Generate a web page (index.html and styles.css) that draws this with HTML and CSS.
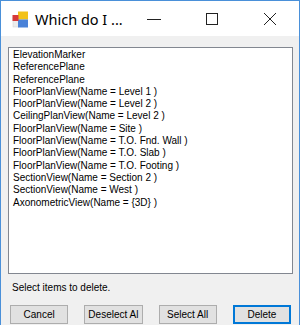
FILE: index.html
```html
<!DOCTYPE html>
<html lang="en">
<head>
    <meta charset="UTF-8">
    <title>Which do I ...</title>
    <link rel="stylesheet" href="styles.css">
</head>
<body>
    <div class="window">
        <div class="titlebar">
            <svg class="app-icon" width="17" height="17" viewBox="0 0 17 17">
                <rect x="1" y="6" width="6" height="10" fill="#ececec" stroke="#d0d0d0" stroke-width="0.5"/>
                <rect x="6" y="0.5" width="10" height="8" fill="#f2c21a"/>
                <rect x="6" y="8.5" width="10" height="8" fill="#4a82d8"/>
                <rect x="0.5" y="4" width="6" height="6" fill="#d63a3a"/>
            </svg>
            <span class="title">Which do I ...</span>
            <div class="controls">
                <div class="ctl">
                    <svg width="14" height="14" viewBox="0 0 14 14"><path d="M0 7.5H14" stroke="#222" stroke-width="1"/></svg>
                </div>
                <div class="ctl">
                    <svg width="14" height="14" viewBox="0 0 14 14"><rect x="1.5" y="1.5" width="11" height="11" fill="none" stroke="#222" stroke-width="1"/></svg>
                </div>
                <div class="ctl">
                    <svg width="14" height="14" viewBox="0 0 14 14"><path d="M1 1L13 13M13 1L1 13" stroke="#222" stroke-width="1"/></svg>
                </div>
            </div>
        </div>

        <div class="client">
            <ul class="listbox">
                <li>ElevationMarker</li>
                <li>ReferencePlane</li>
                <li>ReferencePlane</li>
                <li>FloorPlanView(Name = Level 1 )</li>
                <li>FloorPlanView(Name = Level 2 )</li>
                <li>CeilingPlanView(Name = Level 2 )</li>
                <li>FloorPlanView(Name = Site )</li>
                <li>FloorPlanView(Name = T.O. Fnd. Wall )</li>
                <li>FloorPlanView(Name = T.O. Slab )</li>
                <li>FloorPlanView(Name = T.O. Footing )</li>
                <li>SectionView(Name = Section 2 )</li>
                <li>SectionView(Name = West )</li>
                <li>AxonometricView(Name = {3D} )</li>
            </ul>

            <div class="status">Select items to delete.</div>

            <div class="buttons">
                <button class="btn">Cancel</button>
                <button class="btn">Deselect Al</button>
                <button class="btn">Select All</button>
                <button class="btn btn-default">Delete</button>
            </div>
        </div>
    </div>
</body>
</html>
```

FILE: styles.css
```css
* {
    margin: 0;
    padding: 0;
    box-sizing: border-box;
}

body {
    font-family: "Liberation Sans", Arial, sans-serif;
    background: #f0f0f0;
}

.window {
    width: 300px;
    height: 325px;
    border: 1px solid #4a90d9;
    border-bottom: none;
    background: #f0f0f0;
    overflow: hidden;
    display: flex;
    flex-direction: column;
}

.titlebar {
    height: 35px;
    background: #fff;
    display: flex;
    align-items: center;
    padding-left: 11px;
    flex-shrink: 0;
}

.app-icon {
    display: block;
    margin-top: 1px;
    flex-shrink: 0;
}

.title {
    font-family: "Noto Sans", "Open Sans", sans-serif;
    font-size: 14.5px;
    color: #000;
    margin-left: 6px;
    white-space: nowrap;
}

.controls {
    margin-left: auto;
    display: flex;
    height: 100%;
    flex-shrink: 0;
}

.ctl {
    width: 58px;
    height: 100%;
    display: flex;
    align-items: center;
    justify-content: center;
}

.client {
    flex: 1;
    padding: 11px 6px 0 7px;
}

.listbox {
    list-style: none;
    height: 227px;
    background: #fff;
    border: 1px solid #828790;
    padding: 1px 4px;
    font-size: 10px;
    line-height: 12.3px;
    color: #000;
}

.status {
    font-size: 10px;
    line-height: 12px;
    margin-top: 8px;
    padding-left: 4px;
    color: #000;
}

.buttons {
    display: flex;
    gap: 16px;
    padding: 0 2px;
    margin-top: 11px;
}

.btn {
    width: 59px;
    height: 19px;
    font-family: "Liberation Sans", Arial, sans-serif;
    font-size: 10px;
    color: #000;
    background: #e1e1e1;
    border: 1px solid #adadad;
}

.btn-default {
    border-color: #0078d7;
    box-shadow: inset 0 0 0 1px #0078d7;
}
```
